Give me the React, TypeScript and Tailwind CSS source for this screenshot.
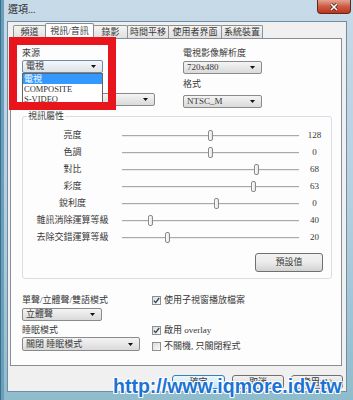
import React from "react"

const ff = "font-['Liberation_Serif','Noto_Sans_CJK_TC',serif]"

const Arrow = () => (
  <svg width="5" height="3" viewBox="0 0 5 3" className="shrink-0">
    <path d="M0 0h5L2.5 3z" fill="#111" />
  </svg>
)

const Combo = ({ text, w, h = "h-[13px]", focus }: { text: string; w: string; h?: string; focus?: boolean }) => (
  <div
    className={`flex ${h} ${w} items-center justify-between rounded-[2px] border pl-[3px] pr-[6px] ${
      focus
        ? "border-[#6d8aa6] bg-linear-to-b from-[#f4f7fa] to-[#dde3e8]"
        : "border-[#8a8a8a] bg-linear-to-b from-[#f4f4f4] to-[#dadada]"
    }`}
  >
    <span className="text-[9px] leading-none text-[#383838]">{text}</span>
    <Arrow />
  </div>
)

const Label = ({ text }: { text: string }) => (
  <div className="h-[12px] text-[9px] leading-[12px] text-[#383838]">{text}</div>
)

const Slider = ({ label, value, pos }: { label: string; value: string; pos: number }) => (
  <div className="grid h-[17px] grid-cols-[99px_177px_31px] items-center">
    <span className="text-center text-[9px] leading-none text-[#383838]">{label}</span>
    <div className="relative h-full">
      <div className="absolute inset-x-0 top-[8px] h-[2px] border-t border-b border-t-[#a9a9a9] border-b-[#ececec]" />
      <div
        className="absolute top-[3px] h-[11px] w-[5px] rounded-[2px] border border-[#8a8a8a] bg-linear-to-r from-[#fdfdfd] to-[#e4e4e4]"
        style={{ left: pos - 3 }}
      />
    </div>
    <span className="text-center text-[9px] leading-none text-[#383838]">{value}</span>
  </div>
)

const Check = ({ checked, label }: { checked?: boolean; label: string }) => (
  <div className="flex h-[12px] items-center gap-[3px]">
    <div className="flex h-[9px] w-[9px] items-center justify-center border border-[#8f8f8f] bg-linear-to-br from-[#dcdcdc] to-[#fafafa]">
      {checked && (
        <svg width="7" height="7" viewBox="0 0 7 7">
          <path d="M0.8 3.6L2.7 5.6L6.2 1" fill="none" stroke="#2d3f55" strokeWidth="1.3" />
        </svg>
      )}
    </div>
    <span className="text-[9px] leading-none text-[#383838]">{label}</span>
  </div>
)

const Btn = ({ text, w, primary }: { text: string; w: string; primary?: boolean }) => (
  <div
    className={`flex h-[14px] ${w} items-center justify-center rounded-[3px] border text-[9px] leading-none text-[#383838] ${
      primary
        ? "border-[#3c7fb1] bg-linear-to-b from-[#eaf6fd] to-[#bee6fd]"
        : "border-[#707070] bg-linear-to-b from-[#f2f2f2] to-[#d4d4d4]"
    }`}
  >
    {text}
  </div>
)

const Tab = ({ text, w, active }: { text: string; w: string; active?: boolean }) =>
  active ? (
    <div className={`relative z-10 -mb-px -ml-px flex h-[16px] ${w} items-center justify-center rounded-t-[2px] border border-b-0 border-[#898c95] bg-[#fdfdfd] text-[9px] leading-none text-[#383838]`}>
      {text}
    </div>
  ) : (
    <div className={`-ml-px flex h-[13px] ${w} items-center justify-center rounded-t-[2px] border border-b-0 border-[#8e8f8f] bg-linear-to-b from-[#f4f4f4] to-[#e0e0e0] text-[9px] leading-none text-[#383838]`}>
      {text}
    </div>
  )

const sliders = [
  { label: "亮度", value: "128", pos: 89 },
  { label: "色調", value: "0", pos: 89 },
  { label: "對比", value: "68", pos: 135 },
  { label: "彩度", value: "63", pos: 132 },
  { label: "銳利度", value: "0", pos: 95 },
  { label: "雜訊消除運算等級", value: "40", pos: 29 },
  { label: "去除交錯運算等級", value: "20", pos: 46 },
]

export default function App() {
  return (
    <div className={`relative flex h-[400px] w-[353px] flex-col overflow-hidden border-l border-[#3f6d8c] bg-linear-to-b from-[#c7dae8] via-[#b6cfe0] to-[#8fbccb] shadow-[inset_3px_0_0_#6a9fbb] ${ff}`}>
      {/* title bar */}
      <div className="flex h-[21px] items-start justify-between">
        <div className="pl-[7px] pt-[5px] text-[10px] leading-none text-[#2a2a2a]">選項...</div>
        <div className="mr-[2px] flex h-[14px] w-[34px] items-center justify-center rounded-b-[4px] border border-t-0 border-[#5e2a20] bg-linear-to-b from-[#e3a393] via-[#cc5a44] to-[#c0331c]">
          <svg width="10" height="8" viewBox="0 0 10 8">
            <path d="M2 1L8 7M8 1L2 7" stroke="#5a1a10" strokeWidth="3" />
            <path d="M2 1L8 7M8 1L2 7" stroke="#fff" strokeWidth="1.6" />
          </svg>
        </div>
      </div>

      {/* client */}
      <div className="ml-[6px] flex h-[371px] w-[340px] flex-col border border-[#6f8ea6] bg-[#f0f0f0]">
        <div className="mt-[1px] flex h-[15px] items-end pl-[6px]">
          <Tab text="頻道" w="w-[33px]" />
          <Tab text="視訊/音訊" w="w-[49px]" active />
          <Tab text="錄影" w="w-[35px]" />
          <Tab text="時間平移" w="w-[42px]" />
          <Tab text="使用者界面" w="w-[54px]" />
          <Tab text="系統裝置" w="w-[42px]" />
        </div>

        <div className="ml-[2px] h-[328px] w-[332px] border border-[#898c95] bg-[#fdfdfd]">
          {/* top section */}
          <div className="flex pl-[11px] pt-[8px]">
            <div className="w-[161px]">
              <Label text="來源" />
              <div className="relative mt-[1px] w-[81px]">
                <Combo text="電視" w="w-[81px]" focus />
                <div className="absolute left-0 top-full z-10 w-[81px] border border-[#646464] bg-white">
                  <div className="h-[10px] bg-[#3399ff] pl-[1px] text-[9px] leading-[10px] text-white">電視</div>
                  <div className="h-[10px] pl-[1px] text-[8.5px] leading-[10px] text-[#333]">COMPOSITE</div>
                  <div className="h-[10px] pl-[1px] text-[8.5px] leading-[10px] text-[#333]">S-VIDEO</div>
                </div>
              </div>
              <div className="mt-[7px]">
                <Label text="聲音來源" />
              </div>
              <div className="mt-[1px]">
                <Combo text="" w="w-[133px]" />
              </div>
            </div>
            <div>
              <Label text="電視影像解析度" />
              <div className="mt-[2px]">
                <Combo text="720x480" w="w-[79px]" />
              </div>
              <div className="mt-[4px]">
                <Label text="格式" />
              </div>
              <div className="mt-[5px]">
                <Combo text="NTSC_M" w="w-[79px]" />
              </div>
            </div>
          </div>

          {/* video properties group */}
          <div className="relative ml-[11px] mt-[8px] h-[163px] w-[310px] rounded-[3px] border border-[#d5dfe5] pt-[10px]">
            <div className="absolute -top-[7px] left-[4px] bg-[#fdfdfd] px-[1px] text-[9px] leading-[12px] text-[#383838]">視訊屬性</div>
            {sliders.map((s) => (
              <Slider key={s.label} label={s.label} value={s.value} pos={s.pos} />
            ))}
            <div className="mt-[7px] flex justify-end pr-[8px]">
              <div className="flex h-[19px] w-[68px] items-center justify-center rounded-[3px] border border-[#707070] bg-linear-to-b from-[#f2f2f2] via-[#ebebeb] to-[#d2d2d2] text-[9px] leading-none text-[#383838]">
                預設值
              </div>
            </div>
          </div>

          {/* lower section */}
          <div className="mt-[15px] flex pl-[11px]">
            <div className="w-[130px]">
              <Label text="單聲/立體聲/雙語模式" />
              <div className="mt-[2px]">
                <Combo text="立體聲" w="w-[80px]" />
              </div>
              <div className="mt-[3px]">
                <Label text="睡眠模式" />
              </div>
              <div className="mt-[1px]">
                <Combo text="關閉 睡眠模式" w="w-[118px]" h="h-[14px]" />
              </div>
            </div>
            <div>
              <Check checked label="使用子視窗播放檔案" />
              <div className="mt-[18px]">
                <Check checked label="啟用 overlay" />
              </div>
              <div className="mt-[4px]">
                <Check label="不關機, 只關閉程式" />
              </div>
            </div>
          </div>
        </div>

        <div className="mt-[9px] flex justify-end gap-[7px] pr-[3px]">
          <Btn text="確定" w="w-[53px]" primary />
          <Btn text="取消" w="w-[52px]" />
          <Btn text="套用(A)" w="w-[52px]" />
        </div>
      </div>

      {/* annotation */}
      <div className="absolute left-[8px] top-[37px] z-20 h-[73px] w-[107px] border-[8px] border-[#e8161c]" />

      {/* watermark */}
      <div className="absolute left-[112px] top-[377px] z-30 font-['Liberation_Sans',sans-serif] text-[19.5px] font-bold leading-[19px] text-[#1b73d3] [text-shadow:-1px_-1px_0_#fff,1px_-1px_0_#fff,-1px_1px_0_#fff,1px_1px_0_#fff]">
        http://www.iqmore.idv.tw
      </div>
    </div>
  )
}
